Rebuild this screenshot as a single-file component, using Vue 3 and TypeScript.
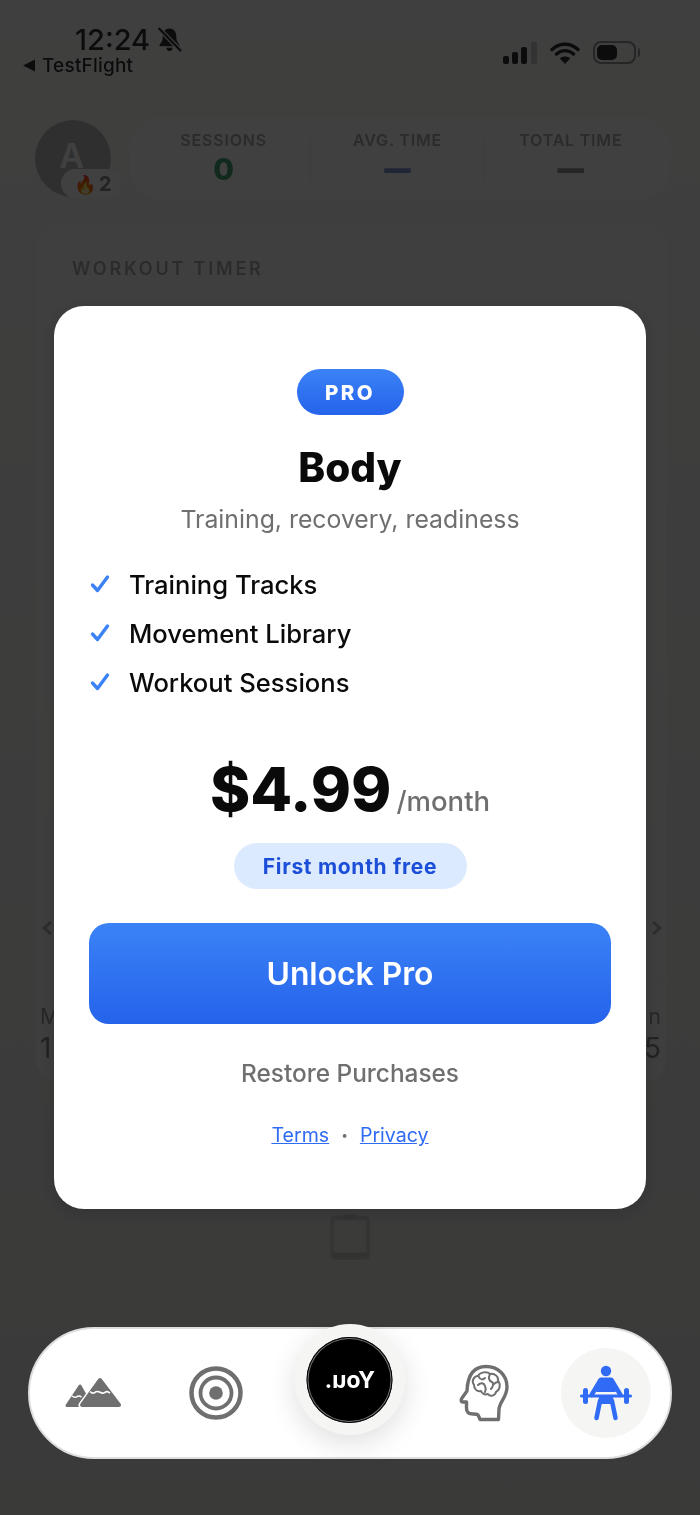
<script setup lang="ts">
const stats = [
  { label: 'SESSIONS', value: '0', tone: 'green' },
  { label: 'AVG. TIME', value: '—', tone: 'blue' },
  { label: 'TOTAL TIME', value: '—', tone: 'grey' }
]
const features = ['Training Tracks', 'Movement Library', 'Workout Sessions']
</script>

<template>
  <div class="screen">
    <!-- dimmed app behind the paywall -->
    <div class="behind">
      <div class="profile-row">
        <div class="avatar">
          <span class="avatar-letter">A</span>
          <span class="streak"><span class="flame">🔥</span>2</span>
        </div>
        <div class="stats-card">
          <div v-for="s in stats" :key="s.label" class="stat">
            <span class="stat-label">{{ s.label }}</span>
            <span class="stat-value" :class="s.tone">{{ s.value }}</span>
          </div>
        </div>
      </div>
      <div class="timer-card">
        <h3 class="timer-title">WORKOUT TIMER</h3>
        <div class="pager">
          <svg width="12" height="16" viewBox="0 0 12 16"><path d="M10 2 3 8l7 6" fill="none" stroke="#b5b5b5" stroke-width="3" /></svg>
          <svg width="12" height="16" viewBox="0 0 12 16"><path d="m2 2 7 6-7 6" fill="none" stroke="#b5b5b5" stroke-width="3" /></svg>
        </div>
        <div class="summary">
          <div class="summary-row labels"><span>M</span><span>n</span></div>
          <div class="summary-row nums"><span>1</span><span>5</span></div>
        </div>
      </div>
      <svg class="clipboard" width="44" height="50" viewBox="0 0 44 50">
        <rect x="4" y="7" width="36" height="40" rx="3" fill="none" stroke="#d2d2d0" stroke-width="4" />
        <path d="M15 6h14M4 44h36" stroke="#c8c8c6" stroke-width="5" />
      </svg>
    </div>

    <div class="overlay"></div>

    <div class="status-bar">
      <div class="status-left">
        <div class="clock-row">
          <span class="clock">12:24</span>
          <svg width="27" height="27" viewBox="0 0 26 26">
            <path d="M13 2.500c-4 0-6.500 3-6.500 7 0 5-1.200 6.500-3 8.500v1.500h19V18c-1.800-2-3-3.500-3-8.500 0-4-2.500-7-6.500-7z" fill="#0c0c0c" />
            <path d="M10 21a3 3 0 0 0 6 0z" fill="#0c0c0c" />
            <path d="M2.500 2 24 24" stroke="#3d3d3d" stroke-width="4.500" />
            <path d="M2.500 2 24 24" stroke="#0c0c0c" stroke-width="2" />
          </svg>
        </div>
        <div class="back-row">
          <svg width="14" height="13" viewBox="0 0 14 13"><path d="M13 0.500v12L1 6.500z" fill="#0c0c0c" /></svg>
          <span>TestFlight</span>
        </div>
      </div>
      <div class="status-right">
        <svg width="34" height="22" viewBox="0 0 34 22">
          <rect x="0" y="14" width="6" height="8" rx="2" fill="#0c0c0c" />
          <rect x="9" y="10" width="6" height="12" rx="2" fill="#0c0c0c" />
          <rect x="18" y="5" width="6" height="17" rx="2" fill="#0c0c0c" />
          <rect x="28" y="0" width="6" height="22" rx="1" fill="#333" />
        </svg>
        <svg width="30" height="22" viewBox="0 0 30 22">
          <path d="M2 7.500c7.500-7 18.500-7 26 0M6.500 12c5-4.500 12-4.500 17 0" fill="none" stroke="#0c0c0c" stroke-width="3.400" stroke-linecap="round" />
          <path d="M15 22 9.800 16.500c3-2.600 7.400-2.600 10.400 0z" fill="#0c0c0c" />
        </svg>
        <div class="battery"><div class="battery-fill"></div></div>
      </div>
    </div>

    <div class="modal-layer">
      <div class="modal">
        <span class="pro-badge">PRO</span>
        <h1 class="title">Body</h1>
        <p class="subtitle">Training, recovery, readiness</p>
        <ul class="features">
          <li v-for="f in features" :key="f">
            <svg width="20" height="20" viewBox="0 0 20 20">
              <path d="M2.500 11 7.500 16.500 17.500 3" fill="none" stroke="#3b82f6" stroke-width="3.400" stroke-linecap="round" stroke-linejoin="round" />
            </svg>
            <span>{{ f }}</span>
          </li>
        </ul>
        <div class="price-row">
          <span class="price">$4.99</span>
          <span class="period">/month</span>
        </div>
        <span class="free-pill">First month free</span>
        <button class="unlock">Unlock Pro</button>
        <a class="restore">Restore Purchases</a>
        <div class="legal">
          <a>Terms</a>
          <span class="dot">•</span>
          <a>Privacy</a>
        </div>
      </div>
    </div>

    <nav class="tab-bar">
      <div class="tab">
        <svg width="58" height="32" viewBox="0 0 58 32">
          <path d="M16 9 3 28.500h24z" fill="#6f6f6f" stroke="#6f6f6f" stroke-width="3" stroke-linejoin="round" />
          <path d="M36 3 18 28h37z" fill="#fff" stroke="#fff" stroke-width="7" stroke-linejoin="round" />
          <path d="M36 3 18 28h37z" fill="#6f6f6f" stroke="#6f6f6f" stroke-width="4" stroke-linejoin="round" />
          <path d="M26 14.500c2 2 3.500 2 5 .8s3-1.200 5 0 3.500 1.200 5 0 3-1 5 .8" fill="none" stroke="#fff" stroke-width="1.600" />
          <path d="M8 19c2 1.600 3.500 1.600 5 .6s2.800-.6 4.500.4" fill="none" stroke="#fff" stroke-width="1.500" />
        </svg>
      </div>
      <div class="tab">
        <svg width="54" height="54" viewBox="0 0 54 54">
          <circle cx="27" cy="27" r="24.500" fill="none" stroke="#6f6f6f" stroke-width="4.500" />
          <circle cx="27" cy="27" r="15.500" fill="none" stroke="#6f6f6f" stroke-width="3.800" />
          <circle cx="27" cy="27" r="6.800" fill="#6f6f6f" />
        </svg>
      </div>
      <div class="tab center-tab">
        <div class="you-ring">
          <div class="you-circle"><span class="you-text">You.</span></div>
        </div>
      </div>
      <div class="tab">
        <svg width="50" height="58" viewBox="0 0 50 58" fill="none" stroke="#6f6f6f" stroke-linejoin="round" stroke-linecap="round">
          <path stroke-width="3.400" d="M21 55.500C19 50 19 50 14 50C9 50 7.500 48 7.500 44V38H4C2 38 1.500 36 3 34L8 27C8.500 12 14 2.500 27 2.500C39 2.500 48 11 48 23C48 33 41 37 40 45L39.500 55.500Z" />
          <path stroke-width="2" d="M15 21C12 17 15 12 19 12C21 8 28 7 31 10C36 9 40 13 39 17C42 20 41 26 37 28C36 32 31 33 29 30C26 31 23 30 22 27C18 28 15 25 15 21Z" />
          <path stroke-width="2" d="M20 13C21 16 24 16 26 14M19 21C22 18 25 19 26 22M31 10C29 14 30 17 33 18C35 19 34 23 32 25M39 18C37 18 36 19 35 20M26 22C27 24 27 26 26 28" />
        </svg>
      </div>
      <div class="tab active-tab">
        <svg width="54" height="56" viewBox="0 0 54 56">
          <circle cx="27" cy="6" r="5.200" fill="#2f6bf5" />
          <path d="M22 13.500H32L36 26H18Z" fill="#2f6bf5" stroke="#2f6bf5" stroke-width="2" stroke-linejoin="round" />
          <path d="M21.500 15 12.500 30M32.500 15 41.500 30" stroke="#2f6bf5" stroke-width="4.500" stroke-linecap="round" />
          <rect x="1" y="29.500" width="52" height="3" rx="1.500" fill="#2f6bf5" />
          <rect x="4" y="23" width="5" height="16" rx="2.500" fill="#2f6bf5" />
          <rect x="45" y="23" width="5" height="16" rx="2.500" fill="#2f6bf5" />
          <path d="M20 32H34L35 39H19Z" fill="#2f6bf5" />
          <path d="M21 36 17.500 53M33 36 36.500 53" stroke="#2f6bf5" stroke-width="4.500" stroke-linecap="round" />
        </svg>
      </div>
    </nav>
  </div>
</template>

<style>
html,
body {
  margin: 0;
  background: #3d3d3d;
}
</style>

<style scoped>
.screen {
  position: relative;
  width: 700px;
  height: 1515px;
  overflow: hidden;
  background: linear-gradient(180deg, #fbfbf9, #e6e6e4);
  font-family: Inter, 'Liberation Sans', sans-serif;
}

.behind {
  display: flex;
  flex-direction: column;
  padding: 117px 35px 0;
  filter: blur(0.7px);
}

.profile-row {
  display: flex;
  align-items: center;
  gap: 19px;
  height: 83px;
}

.avatar {
  position: relative;
  flex: none;
  width: 76px;
  height: 77px;
  border-radius: 50%;
  background: #bcbcbc;
  display: flex;
  align-items: center;
  justify-content: center;
}

.avatar-letter {
  margin: 0 3px 6px 0;
  font-size: 34px;
  font-weight: 600;
  color: #fff;
}

.streak {
  position: absolute;
  left: 26px;
  bottom: -1px;
  display: flex;
  align-items: center;
  gap: 3px;
  width: 60px;
  height: 29px;
  box-sizing: border-box;
  padding-left: 13px;
  border-radius: 15px;
  background: #fff;
  font-size: 20px;
  font-weight: 700;
  color: #8c8c8c;
}

.flame {
  font-size: 18px;
  font-family: 'Noto Sans', sans-serif;
}

.stats-card {
  flex: 1;
  display: grid;
  grid-template-columns: repeat(3, 1fr);
  height: 83px;
  margin-right: -5px;
  padding: 0 13px 0 7px;
  background: #fff;
  border-radius: 30px;
  align-items: center;
}

.stat {
  display: flex;
  flex-direction: column;
  align-items: center;
  height: 44px;
  border-left: 1px solid #efefed;
}

.stat:first-child {
  border-left: 0;
}

.stat-label {
  margin-top: -5px;
  font-size: 16px;
  line-height: 16px;
  font-weight: 600;
  letter-spacing: 0.8px;
  color: #aaa;
}

.stat-value {
  margin-top: 6px;
  font-size: 30px;
  line-height: 30px;
  font-weight: 800;
}

.stat-value.green { color: #4aa57a; }
.stat-value.blue,
.stat-value.grey {
  font-size: 25px;
  -webkit-text-stroke: 1.5px currentColor;
}
.stat-value.blue { color: #8298d4; }
.stat-value.grey { color: #999; }

.timer-card {
  height: 860px;
  margin: 22px -2px 0 1px;
  padding-top: 36px;
  box-sizing: border-box;
  background: rgba(255, 255, 255, 0.5);
  border-radius: 24px;
  display: flex;
  flex-direction: column;
}

.timer-title {
  margin: 0 0 0 36px;
  font-size: 18px;
  line-height: 22px;
  font-weight: 600;
  letter-spacing: 2.8px;
  color: #aaa;
}

.pager {
  display: flex;
  justify-content: space-between;
  margin: 640px 4px 0 5px;
}

.summary {
  margin: 44px -15px 0 -14px;
  height: 100px;
  padding: 24px 20px 0 17px;
  box-sizing: border-box;
  border: 1px solid #ecece9;
  border-radius: 20px;
  display: flex;
  flex-direction: column;
}

.summary-row {
  display: flex;
  justify-content: space-between;
  color: #999;
}

.labels {
  font-size: 21px;
  line-height: 24px;
}

.nums {
  margin-top: 3px;
  font-size: 28px;
  line-height: 32px;
  color: #888;
}

.clipboard {
  align-self: center;
  margin-top: 129px;
}

.overlay {
  position: absolute;
  inset: 0;
  background: rgba(0, 0, 0, 0.75);
}

.status-bar {
  position: absolute;
  top: 25px;
  left: 22px;
  right: 63px;
  display: flex;
  justify-content: space-between;
}

.status-left {
  display: flex;
  flex-direction: column;
}

.clock-row {
  display: flex;
  align-items: center;
  gap: 6px;
  margin-left: 53px;
  height: 29px;
}

.clock {
  font-size: 29px;
  font-weight: 500;
  color: #0c0c0c;
}

.back-row {
  display: flex;
  align-items: center;
  gap: 6px;
  font-size: 19px;
  font-weight: 500;
  letter-spacing: 0.2px;
  color: #0c0c0c;
}

.status-right {
  display: flex;
  align-items: center;
  gap: 13px;
  height: 23px;
  margin: 16px 1px 0 0;
}

.battery {
  position: relative;
  width: 43px;
  height: 23px;
  border: 2px solid #262626;
  border-radius: 8px;
  padding: 2px;
  box-sizing: border-box;
}

.battery::after {
  content: '';
  position: absolute;
  right: -6px;
  top: 5px;
  width: 2px;
  height: 9px;
  border-radius: 0 2px 2px 0;
  background: #262626;
}

.battery-fill {
  width: 20px;
  height: 100%;
  border-radius: 5px;
  background: #0c0c0c;
}

.modal-layer {
  position: absolute;
  inset: 306px 54px auto;
}

.modal {
  display: flex;
  flex-direction: column;
  align-items: center;
  height: 903px;
  padding: 63px 35px 0;
  box-sizing: border-box;
  background: #fff;
  border-radius: 30px;
  box-shadow: 0 4px 20px rgba(0, 0, 0, 0.15);
}

.pro-badge {
  display: flex;
  align-items: center;
  justify-content: center;
  width: 107px;
  height: 46px;
  border-radius: 23px;
  background: linear-gradient(180deg, #3b82f6, #2563eb);
  color: #fff;
  font-size: 20.5px;
  font-weight: 800;
  letter-spacing: 2.4px;
}

.title {
  margin: 30px 0 0;
  font-size: 40.5px;
  line-height: 46px;
  font-weight: 800;
  color: #0a0a0a;
}

.subtitle {
  margin: 13px 0 0;
  font-size: 24.8px;
  line-height: 30px;
  color: #6f6f6f;
}

.features {
  align-self: stretch;
  list-style: none;
  margin: 34px 0 0;
  padding: 0;
  display: flex;
  flex-direction: column;
  gap: 17px;
}

.features li {
  display: flex;
  align-items: center;
  gap: 19px;
  height: 32px;
  padding-left: 1px;
  font-size: 25.6px;
  font-weight: 500;
  color: #0a0a0a;
}

.price-row {
  display: flex;
  align-items: baseline;
  gap: 5px;
  margin-top: 54px;
}

.price {
  font-size: 61px;
  line-height: 74px;
  font-weight: 800;
  color: #0a0a0a;
}

.period {
  font-size: 27.5px;
  font-weight: 500;
  color: #6f6f6f;
}

.free-pill {
  display: flex;
  align-items: center;
  justify-content: center;
  width: 233px;
  height: 46px;
  margin-top: 17px;
  border-radius: 23px;
  background: #dbeafe;
  color: #1d4ed8;
  font-size: 21px;
  font-weight: 700;
  letter-spacing: 0.7px;
}

.unlock {
  align-self: stretch;
  height: 101px;
  margin-top: 34px;
  border: 0;
  border-radius: 20px;
  background: linear-gradient(180deg, #3b82f6, #2563eb);
  color: #fff;
  font-family: inherit;
  font-size: 31.8px;
  font-weight: 600;
}

.restore {
  margin-top: 34px;
  font-size: 24.4px;
  line-height: 30px;
  font-weight: 500;
  color: #6f6f6f;
}

.legal {
  display: flex;
  align-items: center;
  gap: 12px;
  margin-top: 35px;
  font-size: 19.6px;
  line-height: 24px;
  color: #2f6bf5;
}

.legal a {
  text-decoration: underline;
}

.dot {
  font-size: 12px;
  color: #6f6f6f;
}

.tab-bar {
  position: absolute;
  left: 28px;
  top: 1327px;
  width: 644px;
  height: 132px;
  box-sizing: border-box;
  display: grid;
  grid-template-columns: 126px 120px 147px 122px 122px;
  align-items: center;
  background: #fff;
  border: 2px solid #dedede;
  border-radius: 66px;
}

.tab {
  display: flex;
  align-items: center;
  justify-content: center;
}

.center-tab {
  position: relative;
  height: 100%;
}

.you-ring {
  position: absolute;
  top: -5px;
  left: 50%;
  transform: translateX(-50%);
  display: flex;
  align-items: center;
  justify-content: center;
  width: 111px;
  height: 111px;
  border-radius: 50%;
  background: #f5f5f3;
  box-shadow: 0 8px 28px rgba(0, 0, 0, 0.13);
}

.you-circle {
  display: flex;
  align-items: center;
  justify-content: center;
  width: 86px;
  height: 86px;
  box-sizing: border-box;
  border-radius: 50%;
  background: #000;
  box-shadow: inset 0 0 0 1px #000, inset 0 0 0 2px #777;
}

.you-text {
  transform: scaleX(-1);
  color: #fff;
  font-size: 23px;
  font-weight: 700;
}

.active-tab {
  width: 90px;
  height: 90px;
  justify-self: center;
  border-radius: 50%;
  background: #f5f5f3;
}
</style>
